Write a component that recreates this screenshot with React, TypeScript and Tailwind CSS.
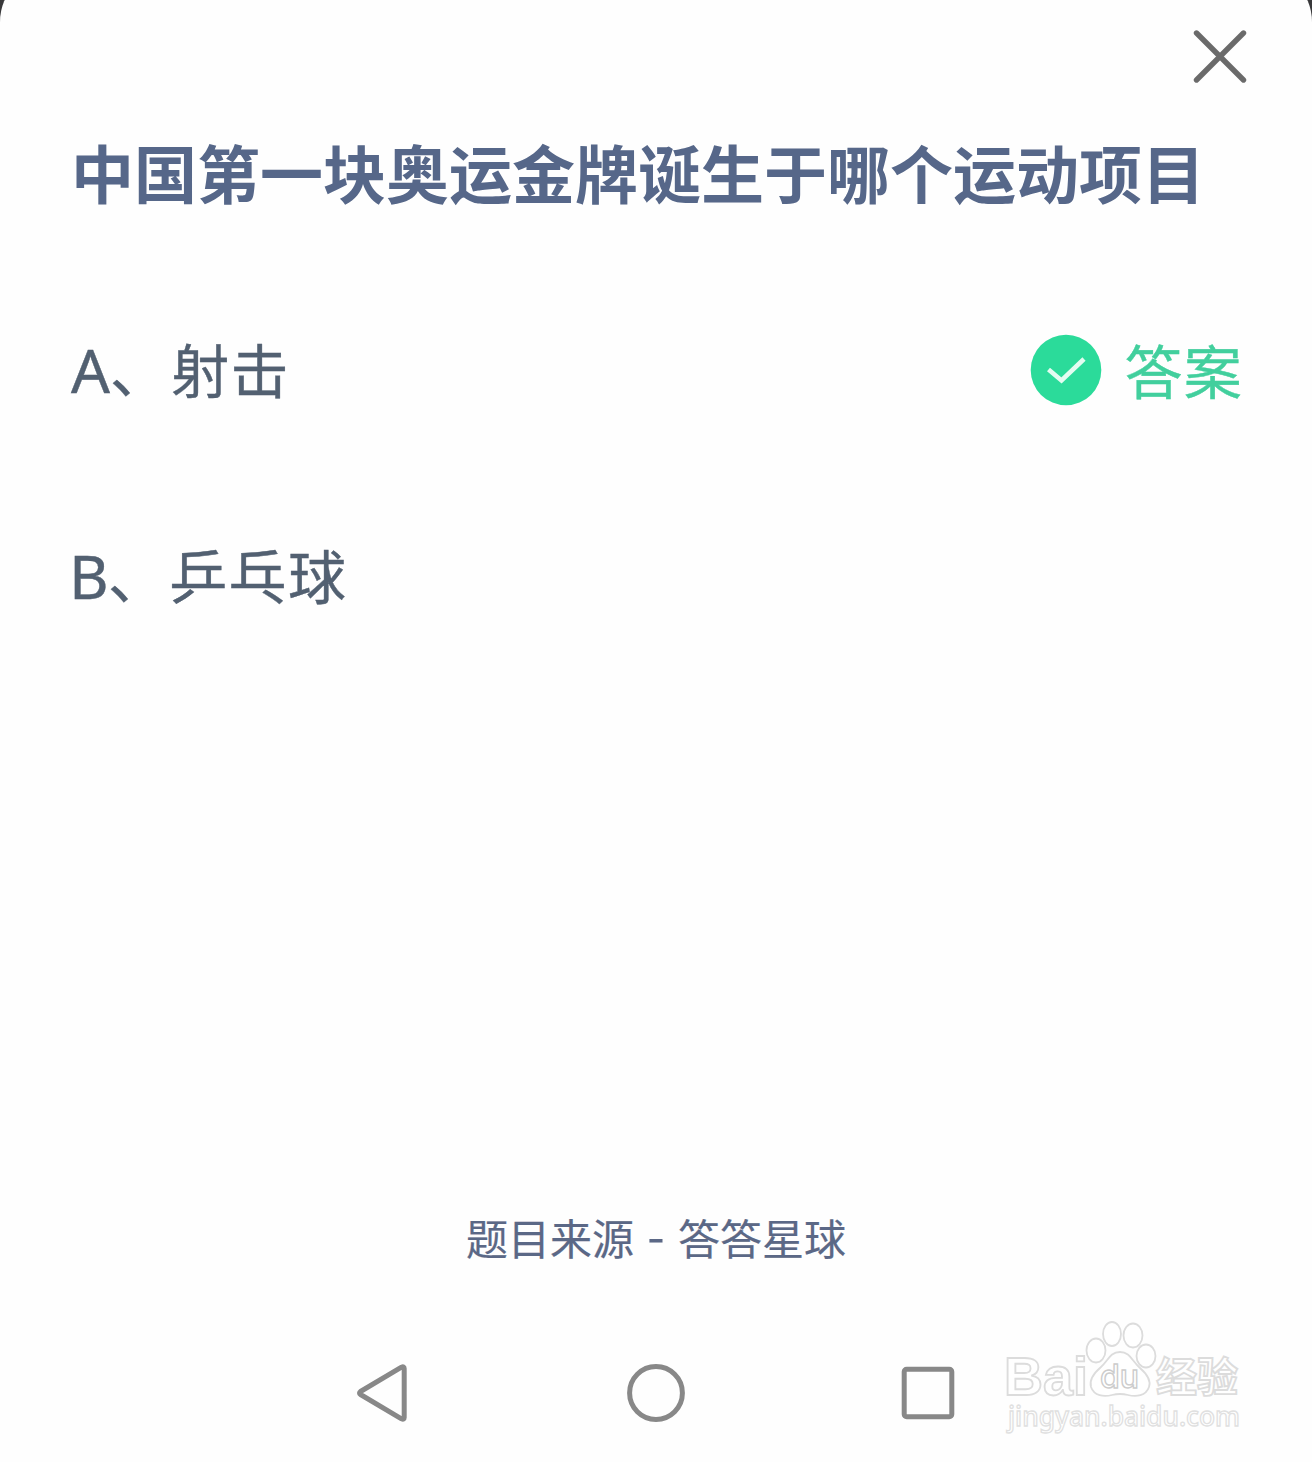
interface Option {
    letter: string;
    text: string;
    correct?: boolean;
}

const options: Option[] = [
    { letter: 'A', text: '射击', correct: true },
    { letter: 'B', text: '乒乓球' },
];

function CloseIcon() {
    return (
        <svg width="54" height="54" viewBox="0 0 54 54" fill="none" stroke="#6a6a6a" strokeWidth="5.4" strokeLinecap="round">
            <path d="M3.5 3 50.5 50M50.5 3 3.5 50" />
        </svg>
    );
}

function CheckBadge() {
    return (
        <svg width="72" height="72" viewBox="0 0 72 72" fill="none">
            <circle cx="36" cy="36" r="35.3" fill="#2bdb9a" />
            <path d="M18.5 35.5 31.5 46.5 54 25" stroke="#e3fcf1" strokeWidth="4.6" />
        </svg>
    );
}

function OptionRow({ option }: { option: Option }) {
    return (
        <div className="flex h-[206px] items-center justify-between pr-[69px] pl-[71px]">
            <div className="flex items-baseline pb-[3px] text-[58px] leading-[80px] tracking-[1.3px] text-[#526071] [-webkit-text-stroke:0.4px_#526071]">
                <span className={`font-['Noto_Sans',sans-serif] text-[61px] leading-[80px] tracking-normal ${option.correct ? 'w-[39px]' : '-ml-[2px] w-[40px]'}`}>
                    {option.letter}
                </span>
                <span className={option.correct ? 'mr-[2px]' : '-ml-px mr-[2px]'}>、</span>
                <span>{option.text}</span>
            </div>
            {option.correct && (
                <div className="flex items-center gap-[22px]">
                    <CheckBadge />
                    <span className="pb-[3px] text-[58px] leading-[80px] tracking-[1.3px] text-[#42cf9d] [-webkit-text-stroke:0.4px_#42cf9d]">
                        答案
                    </span>
                </div>
            )}
        </div>
    );
}

function NavBar() {
    return (
        <svg width="600" height="60" viewBox="356 1363 600 60" fill="none" stroke="#888888" strokeWidth="5" strokeLinejoin="round">
            <path d="M401.5 1367.2Q404.2 1366 404.2 1368.5V1417.5Q404.2 1420 401.5 1418.8L360.5 1394.5Q358.5 1393 360.5 1391.5Z" />
            <circle cx="656" cy="1393" r="26.4" />
            <rect x="904.2" y="1369.2" width="47.6" height="47.6" rx="2.5" />
        </svg>
    );
}

const toes = [
    { cx: 1096, cy: 1350.5, rx: 9.5, ry: 12 },
    { cx: 1112, cy: 1334, rx: 9, ry: 12 },
    { cx: 1133, cy: 1335.5, rx: 9.5, ry: 12 },
    { cx: 1146, cy: 1356, rx: 9.5, ry: 11.5 },
];

function Watermark() {
    return (
        <svg width="244" height="130" viewBox="1003 1318 244 130" fill="#ffffff" stroke="#dcdcdc" strokeWidth="1.8">
            <text x="1004" y="1395" fontSize="54" textLength="84" lengthAdjust="spacingAndGlyphs" className="font-['Liberation_Sans',sans-serif] font-bold">
                Bai
            </text>
            {toes.map((t) => (
                <ellipse key={t.cx} cx={t.cx} cy={t.cy} rx={t.rx} ry={t.ry} />
            ))}
            <path d="M1120 1352C1130 1352 1132 1361 1140 1368C1148 1375 1151 1381 1149 1387C1146 1396 1136 1397 1128 1395Q1120 1393 1112 1395C1104 1397 1094 1396 1091 1387C1089 1380 1094 1373 1101 1367C1108 1361 1110 1352 1120 1352Z" />
            <text x="1100" y="1388" fontSize="33" textLength="39" lengthAdjust="spacingAndGlyphs" stroke="#cccccc" strokeWidth="1.4" className="font-['Inter',sans-serif] font-medium">
                du
            </text>
            <text x="1156" y="1391.5" fontSize="41" textLength="82" lengthAdjust="spacingAndGlyphs" className="font-bold">
                经验
            </text>
            <text x="1008" y="1425.5" fontSize="27" textLength="232" lengthAdjust="spacingAndGlyphs" stroke="#e0e0e0" strokeWidth="1.3" className="font-['Noto_Sans',sans-serif] font-medium">
                jingyan.baidu.com
            </text>
        </svg>
    );
}

export default function App() {
    return (
        <div className="h-[1462px] w-[1312px] overflow-hidden bg-[#38383a] font-['Noto_Sans_CJK_SC',sans-serif]">
            <div className="-mt-[32px] flex h-[1494px] flex-col rounded-t-[54px] bg-[#fefefe] pt-[32px]">
                <div className="flex h-[131px] justify-end pt-[30px] pr-[65px]">
                    <button className="h-[54px]" aria-label="关闭">
                        <CloseIcon />
                    </button>
                </div>
                <h1 className="pl-[71px] text-[63px] leading-[80px] font-bold whitespace-nowrap text-[#566789]">
                    中国第一块奥运金牌诞生于哪个运动项目
                </h1>
                <div className="mt-[56px]">
                    {options.map((o) => (
                        <OptionRow key={o.letter} option={o} />
                    ))}
                </div>
                <p className="mt-[528px] flex h-[60px] justify-center text-[42px] leading-[60px] text-[#5b6886] [-webkit-text-stroke:0.2px_#5b6886]">
                    <span>题目来源</span>
                    <span className="w-[44px] text-center text-[50px] leading-[52px]">-</span>
                    <span>答答星球</span>
                </p>
                <div className="mt-[51px] flex gap-[47px] pl-[356px]">
                    <div className="pt-[45px]">
                        <NavBar />
                    </div>
                    <Watermark />
                </div>
            </div>
        </div>
    );
}
